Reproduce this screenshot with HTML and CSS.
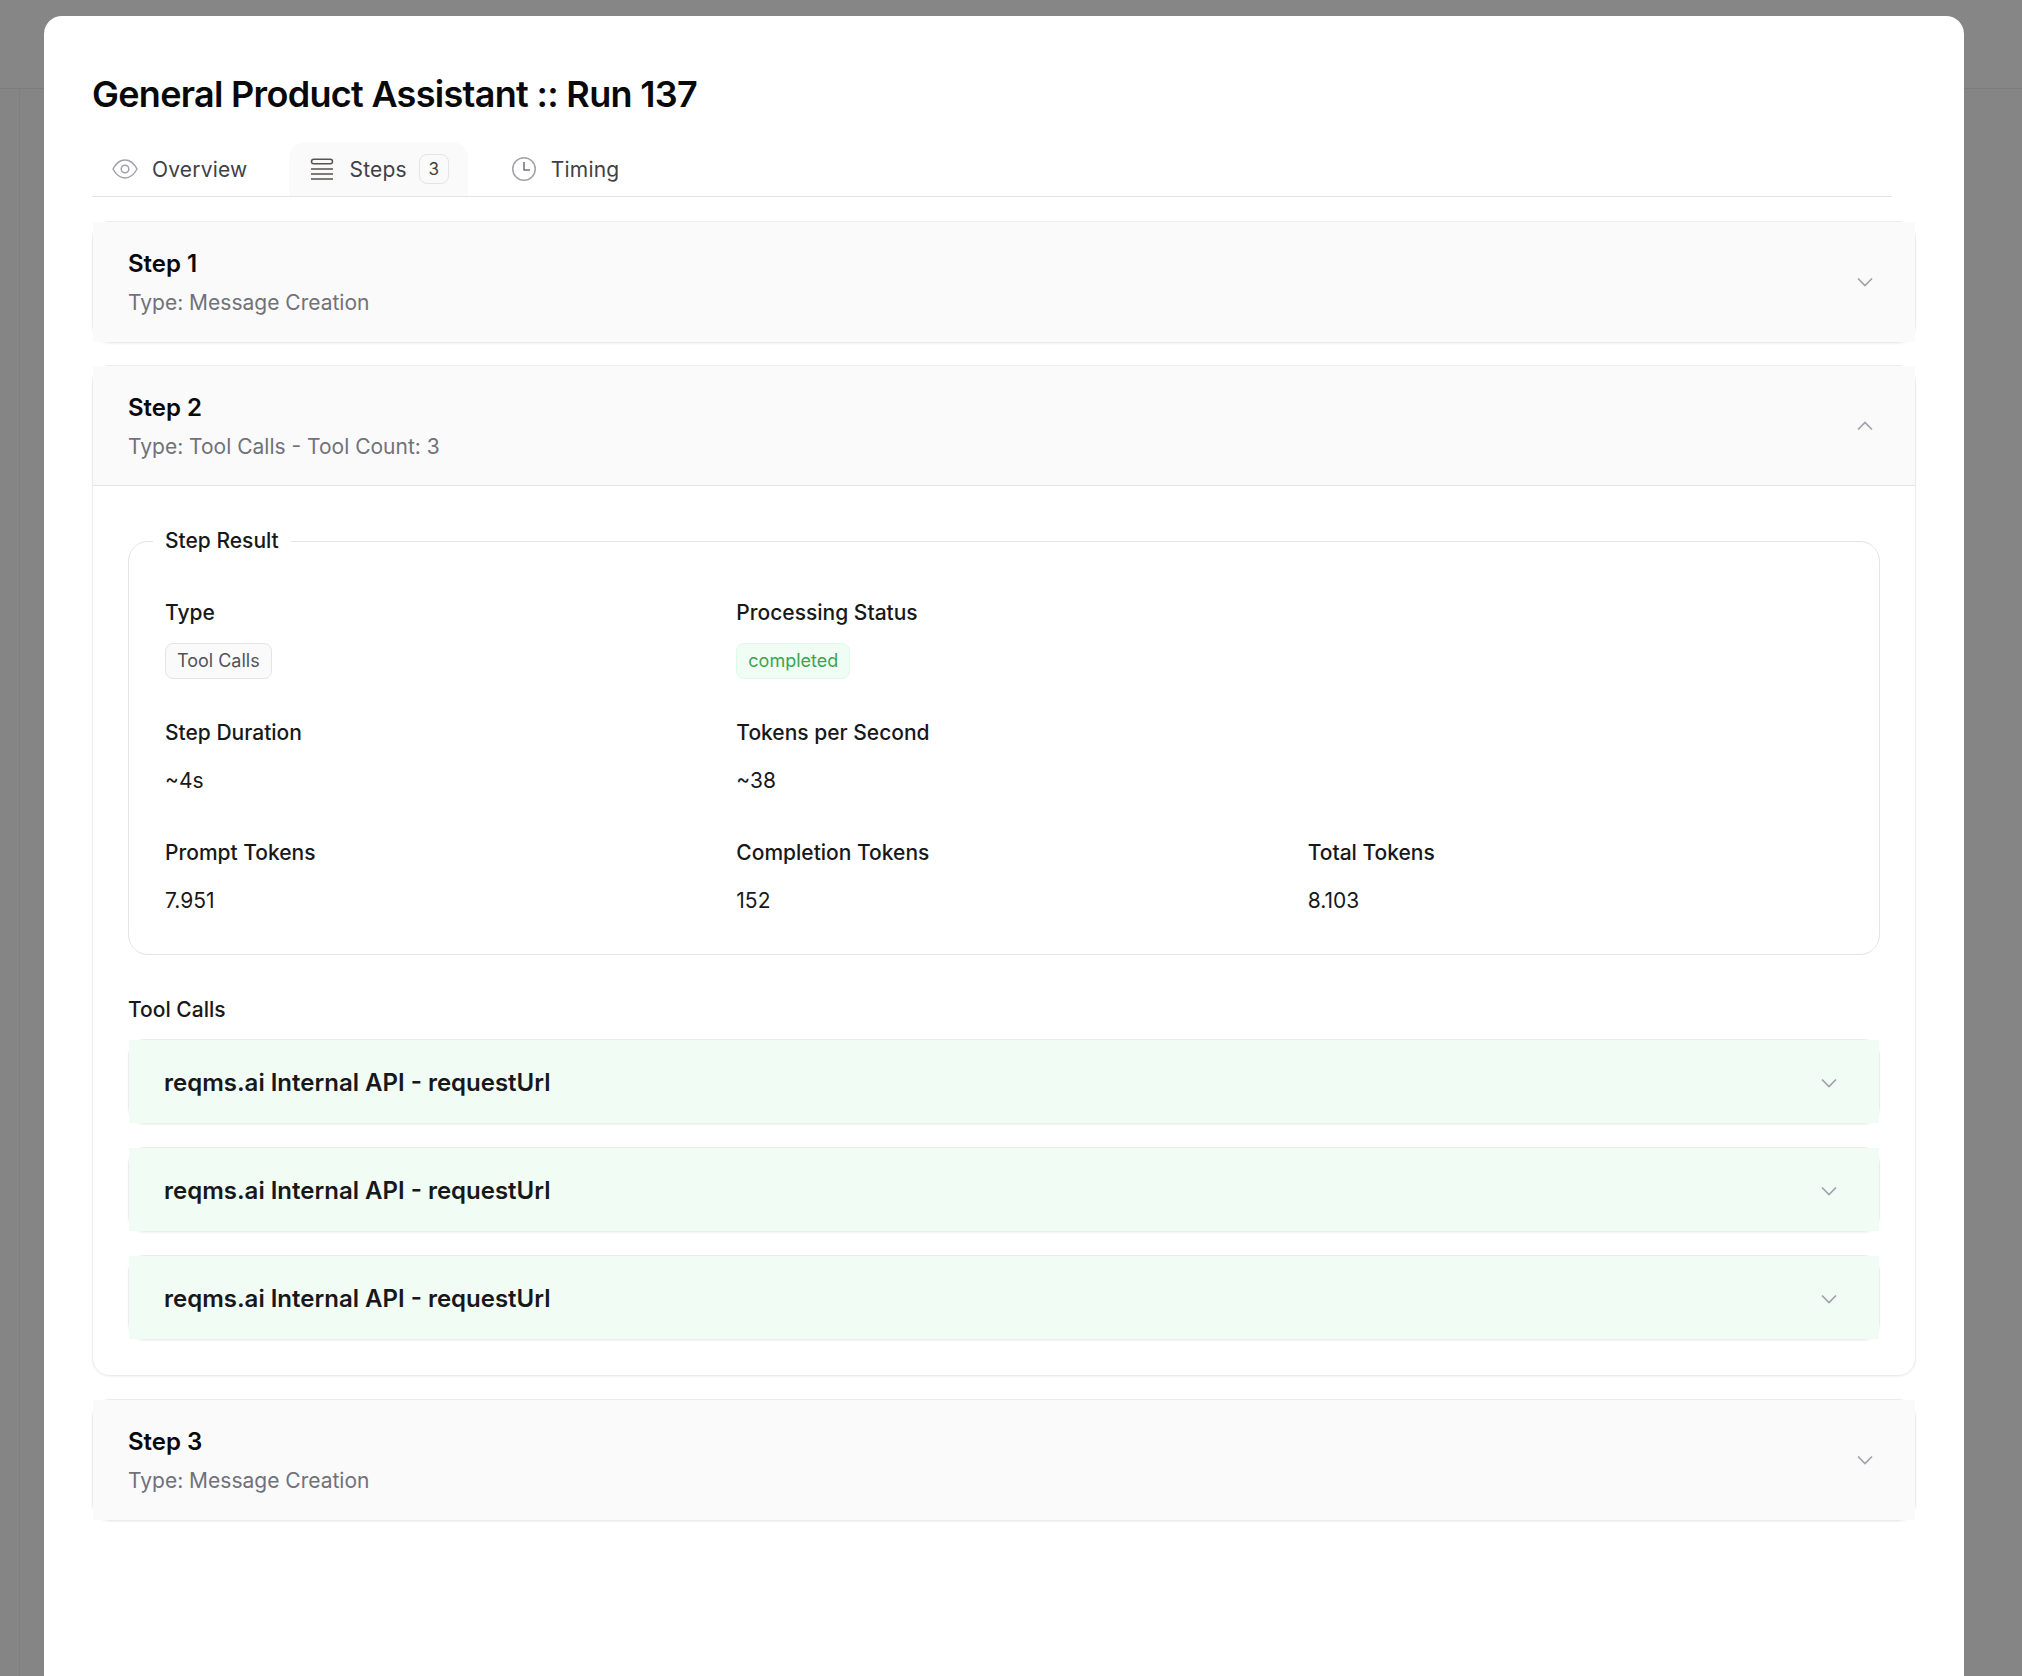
FILE: index.html
```html
<!DOCTYPE html>
<html lang="en">
<head>
<meta charset="utf-8">
<title>General Product Assistant :: Run 137</title>
<link rel="stylesheet" href="styles.css">
</head>
<body>
<div class="backdrop">
  <div class="backdrop-top"></div>
  <div class="backdrop-main"><div class="backdrop-side"></div></div>
</div>
<div class="modal">
  <h1 class="title">General Product Assistant :: Run 137</h1>
  <nav class="tabs">
    <a class="tab">
      <svg class="tab-icon" viewBox="0 0 26 26" fill="none" stroke="#a1a1aa" stroke-width="1.5"><path d="M1 13C4 7.300 8 4 13 4S22 7.300 25 13C22 18.700 18 22 13 22S4 18.700 1 13Z"/><circle cx="13" cy="13" r="3.800"/></svg>
      <span>Overview</span>
    </a>
    <a class="tab tab-active">
      <svg class="tab-icon" viewBox="0 0 26 26" fill="none" stroke="#57534e" stroke-width="1.5"><rect x="2.500" y="3.250" width="21" height="4.500" rx="2.250"/><path d="M2 13H24M2 18H24M2 23H24"/></svg>
      <span>Steps</span>
      <span class="tab-badge">3</span>
    </a>
    <a class="tab">
      <svg class="tab-icon" viewBox="0 0 26 26" fill="none" stroke="#a1a1aa" stroke-width="1.5"><circle cx="13" cy="13" r="11.250"/><path d="M13 6V14H19" stroke="#71717a"/></svg>
      <span>Timing</span>
    </a>
  </nav>

  <section class="card">
    <header class="card-head">
      <div class="step-text">
        <div class="step-name">Step 1</div>
        <div class="step-type">Type: Message Creation</div>
      </div>
      <svg class="chev" viewBox="0 0 16 10" fill="none"><path d="M1 1.500L8 8.500L15 1.500"/></svg>
    </header>
  </section>

  <section class="card">
    <header class="card-head card-head-open">
      <div class="step-text">
        <div class="step-name">Step 2</div>
        <div class="step-type">Type: Tool Calls - Tool Count: 3</div>
      </div>
      <svg class="chev" viewBox="0 0 16 10" fill="none"><path d="M1 8.500L8 1.500L15 8.500"/></svg>
    </header>
    <div class="card-body">
      <fieldset class="result">
        <legend class="result-legend">Step Result</legend>
        <div class="fields">
          <div class="field">
            <div class="field-label">Type</div>
            <div class="field-value"><span class="chip">Tool Calls</span></div>
          </div>
          <div class="field">
            <div class="field-label">Processing Status</div>
            <div class="field-value"><span class="chip chip-green">completed</span></div>
          </div>
          <div class="field"></div>
          <div class="field">
            <div class="field-label">Step Duration</div>
            <div class="field-value">~4s</div>
          </div>
          <div class="field">
            <div class="field-label">Tokens per Second</div>
            <div class="field-value">~38</div>
          </div>
          <div class="field"></div>
          <div class="field">
            <div class="field-label">Prompt Tokens</div>
            <div class="field-value">7.951</div>
          </div>
          <div class="field">
            <div class="field-label">Completion Tokens</div>
            <div class="field-value">152</div>
          </div>
          <div class="field">
            <div class="field-label">Total Tokens</div>
            <div class="field-value">8.103</div>
          </div>
        </div>
      </fieldset>
      <div class="tools-label">Tool Calls</div>
      <div class="tools">
        <div class="tool">
          <div class="tool-head">
            <span class="tool-name">reqms.ai Internal API - requestUrl</span>
            <svg class="chev" viewBox="0 0 16 10" fill="none"><path d="M1 1.500L8 8.500L15 1.500"/></svg>
          </div>
        </div>
        <div class="tool">
          <div class="tool-head">
            <span class="tool-name">reqms.ai Internal API - requestUrl</span>
            <svg class="chev" viewBox="0 0 16 10" fill="none"><path d="M1 1.500L8 8.500L15 1.500"/></svg>
          </div>
        </div>
        <div class="tool">
          <div class="tool-head">
            <span class="tool-name">reqms.ai Internal API - requestUrl</span>
            <svg class="chev" viewBox="0 0 16 10" fill="none"><path d="M1 1.500L8 8.500L15 1.500"/></svg>
          </div>
        </div>
      </div>
    </div>
  </section>

  <section class="card">
    <header class="card-head">
      <div class="step-text">
        <div class="step-name">Step 3</div>
        <div class="step-type">Type: Message Creation</div>
      </div>
      <svg class="chev" viewBox="0 0 16 10" fill="none"><path d="M1 1.500L8 8.500L15 1.500"/></svg>
    </header>
  </section>
</div>
</body>
</html>
```
FILE: styles.css
```css
* { box-sizing: border-box; }
html, body { margin: 0; height: 100%; }
body {
  background: #858585;
  font-family: Inter, "Liberation Sans", sans-serif;
  color: #09090b;
  overflow: hidden;
  position: relative;
}
.backdrop { height: 100%; display: flex; flex-direction: column; }
.backdrop-top { height: 89px; border-bottom: 1px solid #7c7c7c; background: #868686; }
.backdrop-main { flex: 1; display: flex; }
.backdrop-side { width: 20px; border-right: 1px solid #7f7f7f; }

.modal {
  position: absolute;
  left: 44px;
  top: 16px;
  width: 1920px;
  height: 1700px;
  background: #fff;
  border-radius: 18px;
  padding: 0 48px;
}
.title {
  margin: 0;
  padding-top: 55px;
  font-size: 36px;
  line-height: 46px;
  font-weight: 600;
  letter-spacing: -0.7px;
  color: #09090b;
}
.tabs {
  display: flex;
  margin-top: 25px;
  margin-right: 24px;
  height: 55px;
  border-bottom: 1px solid #e4e4e7;
  gap: 23px;
}
.tab {
  display: flex;
  align-items: center;
  gap: 14px;
  padding: 0 20px;
  height: 54px;
  font-size: 21px;
  letter-spacing: 0.2px;
  color: #3f3f46;
  border-radius: 16px 16px 0 0;
}
.tab-active { background: #fafafa; padding-right: 19px; margin-left: -1px; }
.tab-icon { width: 26px; height: 26px; flex: none; }
.tab-badge {
  width: 30px;
  height: 30px;
  border: 1px solid #e4e4e7;
  border-radius: 8px;
  background: #fafafa;
  display: flex;
  align-items: center;
  justify-content: center;
  font-size: 17px;
  margin-left: -2px;
}

.card {
  margin-top: 23px;
  border: 1px solid #ececee;
  border-radius: 18px;
  box-shadow: 0 1px 2px rgba(0, 0, 0, 0.05);
}
.card + .card + .card { margin-top: 23px; }
.tabs + .card { margin-top: 24px; }
.tabs + .card + .card { margin-top: 22px; }
.card-head {
  background: #fafafa;
  height: 120px;
  padding: 0 42px 0 35px;
  display: flex;
  align-items: center;
  justify-content: space-between;
}
.card-head-open { border-bottom: 1px solid #e4e4e7; }
.step-text { padding-top: 3px; }
.step-name { font-size: 24px; line-height: 30px; font-weight: 600; color: #09090b; }
.step-type { margin-top: 9px; font-size: 21px; line-height: 30px; color: #71717a; }
.chev { width: 16px; height: 10px; flex: none; }
.chev path { stroke: #a1a1aa; stroke-width: 1.7; }
.card-body { padding: 40px 35px 35px; }

.result {
  margin: 0;
  padding: 42px 36px 35px;
  border: 1px solid #e4e4e7;
  border-radius: 20px;
  min-inline-size: 0;
}
.result-legend { padding: 0 12px; margin-left: -12px; font-size: 21px; line-height: 30px; font-weight: 500; color: #18181b; }
.fields { display: grid; grid-template-columns: repeat(3, 1fr); column-gap: 36px; row-gap: 39px; }
.field-label { font-size: 21px; line-height: 30px; font-weight: 500; color: #18181b; }
.field-value { margin-top: 15px; font-size: 21px; line-height: 36px; color: #18181b; min-height: 36px; display: flex; align-items: center; }
.chip {
  display: inline-flex;
  align-items: center;
  height: 36px;
  padding: 0 11px;
  border: 1px solid #e4e4e7;
  border-radius: 8px;
  background: #fafafa;
  font-size: 18px;
  color: #52525b;
}
.chip-green { background: #f0fdf4; border-color: #dcfce7; color: #3ea34f; }

.tools-label { margin-top: 40px; font-size: 21px; line-height: 30px; font-weight: 500; color: #18181b; }
.tools { margin-top: 14px; display: flex; flex-direction: column; gap: 23px; }
.tool {
  height: 85px;
  border: 1px solid #ececee;
  border-radius: 16px;
  box-shadow: 0 1px 2px rgba(0, 0, 0, 0.05);
}
.tool-head {
  height: 83px;
  background: #f1fcf5;
  padding: 2px 42px 0 35px;
  display: flex;
  align-items: center;
  justify-content: space-between;
}
.tool-name { font-size: 24px; font-weight: 600; color: #18181b; }
```
